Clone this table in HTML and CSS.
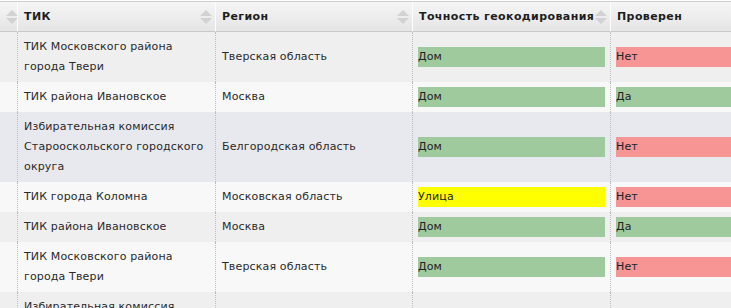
FILE: index.html
```html
<!DOCTYPE html>
<html lang="ru">
  <head>
    <meta charset="UTF-8" />
    <title>ТИК — точность геокодирования</title>
    <link rel="stylesheet" href="styles.css">
  </head>
  <body>

    <div class="grid">
      <table class="grid-table">
        <colgroup>
          <col class="c-edge">
          <col class="c-name">
          <col class="c-region">
          <col class="c-geo">
          <col class="c-check">
        </colgroup>
        <thead>
          <tr>
            <th><div class="th-inner"><span></span><svg class="sort" viewBox="0 0 12 14"><polygon points="6,0 12,6 0,6"/><polygon points="0,8 12,8 6,14"/></svg></div></th>
            <th><div class="th-inner"><span>ТИК</span><svg class="sort" viewBox="0 0 12 14"><polygon points="6,0 12,6 0,6"/><polygon points="0,8 12,8 6,14"/></svg></div></th>
            <th><div class="th-inner"><span>Регион</span><svg class="sort" viewBox="0 0 12 14"><polygon points="6,0 12,6 0,6"/><polygon points="0,8 12,8 6,14"/></svg></div></th>
            <th><div class="th-inner"><span>Точность геокодирования</span><svg class="sort" viewBox="0 0 12 14"><polygon points="6,0 12,6 0,6"/><polygon points="0,8 12,8 6,14"/></svg></div></th>
            <th><div class="th-inner"><span>Проверен</span></div></th>
          </tr>
        </thead>
        <tbody>
          <tr class="r-odd">
            <td></td>
            <td>ТИК Московского района<br>города Твери</td>
            <td>Тверская область</td>
            <td><div class="tag tag-ok">Дом</div></td>
            <td><div class="tag tag-no">Нет</div></td>
          </tr>
          <tr class="r-even">
            <td></td>
            <td>ТИК района Ивановское</td>
            <td>Москва</td>
            <td><div class="tag tag-ok">Дом</div></td>
            <td><div class="tag tag-ok">Да</div></td>
          </tr>
          <tr class="r-hover">
            <td></td>
            <td>Избирательная комиссия<br>Старооскольского городского<br>округа</td>
            <td>Белгородская область</td>
            <td><div class="tag tag-ok">Дом</div></td>
            <td><div class="tag tag-no">Нет</div></td>
          </tr>
          <tr class="r-even">
            <td></td>
            <td>ТИК города Коломна</td>
            <td>Московская область</td>
            <td><div class="tag tag-street">Улица</div></td>
            <td><div class="tag tag-no">Нет</div></td>
          </tr>
          <tr class="r-odd">
            <td></td>
            <td>ТИК района Ивановское</td>
            <td>Москва</td>
            <td><div class="tag tag-ok">Дом</div></td>
            <td><div class="tag tag-ok">Да</div></td>
          </tr>
          <tr class="r-even">
            <td></td>
            <td>ТИК Московского района<br>города Твери</td>
            <td>Тверская область</td>
            <td><div class="tag tag-ok">Дом</div></td>
            <td><div class="tag tag-no">Нет</div></td>
          </tr>
          <tr class="r-odd">
            <td></td>
            <td>Избирательная комиссия<br>Старооскольского городского<br>округа</td>
            <td>Белгородская область</td>
            <td><div class="tag tag-ok">Дом</div></td>
            <td><div class="tag tag-no">Нет</div></td>
          </tr>
        </tbody>
      </table>
    </div>

  </body>
</html>
```

FILE: styles.css
```css
* {
  box-sizing: border-box;
}

body {
  margin: 0;
  background: #fff;
  font-family: "DejaVu Sans", Verdana, sans-serif;
  font-size: 11px;
  color: #222;
  overflow: hidden;
}

.grid {
  margin-top: 1px;
  border-top: 1px solid #cdcdcd;
  overflow: hidden;
}

.grid-table {
  table-layout: fixed;
  border-collapse: separate;
  border-spacing: 0;
  width: 810px;
}

.c-edge { width: 17px; }
.c-name { width: 198px; }
.c-region { width: 197px; }
.c-geo { width: 198px; }
.c-check { width: 200px; }

/* header */
.grid-table th {
  height: 30px;
  padding: 0 3px 0 6px;
  background: linear-gradient(#f5f5f5, #e5e5e5);
  border-bottom: 1px solid #c9c9c9;
  border-left: 1px solid #fdfdfd;
  text-align: left;
  font-weight: bold;
  color: #1e1e1e;
  letter-spacing: 0.4px;
}

.grid-table th:first-child {
  border-left: 0;
}

.th-inner {
  display: flex;
  align-items: center;
  justify-content: space-between;
  white-space: nowrap;
}

.sort {
  width: 12px;
  height: 14px;
  flex: none;
  fill: #d2d2d2;
}

/* body */
.grid-table td {
  padding: 5px 5px 5px 6px;
  line-height: 20px;
  vertical-align: middle;
  border-left: 1px dotted #bdbdbd;
  color: #2a2a2a;
  letter-spacing: 0.15px;
}

.grid-table td:first-child {
  border-left: 0;
}

.r-odd { background: #efefef; }
.r-even { background: #f8f8f8; }
.r-hover { background: #e8e9ee; }

.tag {
  height: 20px;
  line-height: 20px;
  margin-left: -1px;
  color: #222;
}

.tag-ok { background: #9fca9d; }
.tag-no { background: #f79595; }
.tag-street { background: #ffff00; }
```
